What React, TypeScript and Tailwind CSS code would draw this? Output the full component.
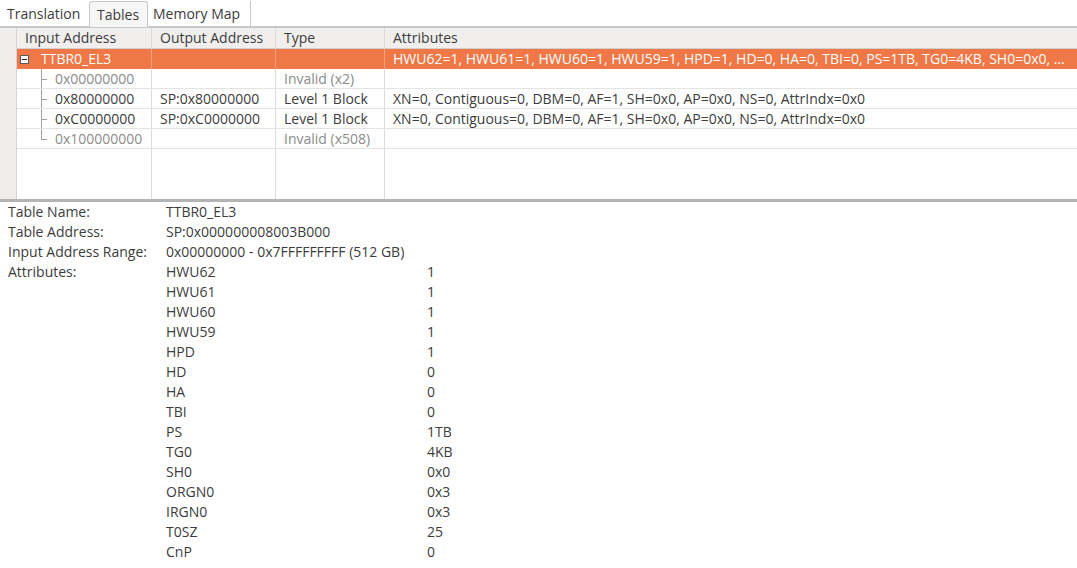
import React from 'react'

const font = { fontFamily: '"Open Sans", "DejaVu Sans", sans-serif' }

type Row = { input: string; output: string; type: string; attrs: string; invalid?: boolean; last?: boolean }

const children: Row[] = [
  { input: '0x00000000', output: '', type: 'Invalid (x2)', attrs: '', invalid: true },
  { input: '0x80000000', output: 'SP:0x80000000', type: 'Level 1 Block', attrs: 'XN=0, Contiguous=0, DBM=0, AF=1, SH=0x0, AP=0x0, NS=0, AttrIndx=0x0' },
  { input: '0xC0000000', output: 'SP:0xC0000000', type: 'Level 1 Block', attrs: 'XN=0, Contiguous=0, DBM=0, AF=1, SH=0x0, AP=0x0, NS=0, AttrIndx=0x0' },
  { input: '0x100000000', output: '', type: 'Invalid (x508)', attrs: '', invalid: true, last: true },
]

const attributes: [string, string][] = [
  ['HWU62', '1'], ['HWU61', '1'], ['HWU60', '1'], ['HWU59', '1'], ['HPD', '1'],
  ['HD', '0'], ['HA', '0'], ['TBI', '0'], ['PS', '1TB'], ['TG0', '4KB'],
  ['SH0', '0x0'], ['ORGN0', '0x3'], ['IRGN0', '0x3'], ['T0SZ', '25'], ['CnP', '0'],
]

const cell = 'h-full flex items-center border-r border-[#dcdcdc] overflow-hidden whitespace-nowrap'

function Tabs() {
  return (
    <div className="flex items-end h-[27px] bg-white">
      <div className="w-[89px] h-[26px] pl-[7px] flex items-center border-b border-[#c8c8c8]">Translation</div>
      <div className="w-[59px] h-[26px] pl-[7px] flex items-center bg-[#f6f6f6] border border-b-0 border-[#c8c8c8] rounded-t-[3px]">Tables</div>
      <div className="w-[103px] h-[26px] pl-[5px] flex items-center border-r border-b border-[#c8c8c8]">Memory Map</div>
      <div className="flex-1 h-[26px] border-b border-[#c8c8c8]" />
    </div>
  )
}

function TreeLine({ last }: { last?: boolean }) {
  return (
    <div className="relative w-[14px] h-full ml-[24px] shrink-0">
      <div className={`absolute left-0 top-0 w-px bg-[#a0a0a0] ${last ? 'h-1/2' : 'h-full'}`} />
      <div className="absolute left-0 top-1/2 w-[6px] h-px bg-[#a0a0a0]" />
    </div>
  )
}

function Table() {
  return (
    <div className="flex h-[172px] border-t border-[#c8c8c8]">
      <div className="w-[17px] shrink-0 bg-[#efeeed] border-r border-[#d4d4d4]" />
      <div className="flex-1 flex flex-col min-w-0">
        <div className="flex h-[21px] bg-[#f0efee] border-b border-[#d0d0d0] text-[#3c3c3c]">
          <div className={`${cell} w-[135px] pl-[8px] border-[#cfcfcf]`}>Input Address</div>
          <div className={`${cell} w-[124px] pl-[8px] border-[#cfcfcf]`}>Output Address</div>
          <div className={`${cell} w-[109px] pl-[8px] border-[#cfcfcf]`}>Type</div>
          <div className="flex-1 flex items-center pl-[8px]">Attributes</div>
        </div>
        <div className="flex h-[20px] bg-[#f07746] text-white">
          <div className={`${cell} w-[135px] border-[#f6a07c]`}>
            <div className="ml-[3px] mr-[12px] w-[9px] h-[9px] bg-white border border-[#5a5a5a] flex items-center justify-center shrink-0">
              <div className="w-[5px] h-px bg-[#222]" />
            </div>
            TTBR0_EL3
          </div>
          <div className={`${cell} w-[124px] border-[#f6a07c]`} />
          <div className={`${cell} w-[109px] border-[#f6a07c]`} />
          <div className="flex-1 min-w-0 flex items-center pl-[8px] whitespace-nowrap">
            HWU62=1, HWU61=1, HWU60=1, HWU59=1, HPD=1, HD=0, HA=0, TBI=0, PS=1TB, TG0=4KB, SH0=0x0, …
          </div>
        </div>
        {children.map((r) => (
          <div key={r.input} className={`flex h-[20px] border-b border-[#e4e4e4] ${r.invalid ? 'text-[#8c8c8c]' : 'text-[#3c3c3c]'}`}>
            <div className={`${cell} w-[135px]`}>
              <TreeLine last={r.last} />
              {r.input}
            </div>
            <div className={`${cell} w-[124px] pl-[8px]`}>{r.output}</div>
            <div className={`${cell} w-[109px] pl-[8px]`}>{r.type}</div>
            <div className="flex-1 flex items-center pl-[8px] whitespace-nowrap overflow-hidden">{r.attrs}</div>
          </div>
        ))}
        <div className="flex flex-1">
          <div className={`${cell} w-[135px]`} />
          <div className={`${cell} w-[124px]`} />
          <div className={`${cell} w-[109px]`} />
          <div className="flex-1" />
        </div>
      </div>
    </div>
  )
}

function Details() {
  const info: [string, string][] = [
    ['Table Name:', 'TTBR0_EL3'],
    ['Table Address:', 'SP:0x000000008003B000'],
    ['Input Address Range:', '0x00000000 - 0x7FFFFFFFFF (512 GB)'],
  ]
  return (
    <div className="pl-[8px] text-[#3c3c3c]">
      {info.map(([k, v]) => (
        <div key={k} className="flex h-[20px] items-center">
          <div className="w-[158px] shrink-0">{k}</div>
          <div>{v}</div>
        </div>
      ))}
      <div className="flex">
        <div className="w-[158px] shrink-0 h-[20px] flex items-center">Attributes:</div>
        <div className="flex flex-col">
          {attributes.map(([k, v]) => (
            <div key={k} className="flex h-[20px] items-center">
              <div className="w-[261px] shrink-0">{k}</div>
              <div>{v}</div>
            </div>
          ))}
        </div>
      </div>
    </div>
  )
}

export default function App() {
  return (
    <div className="w-[1077px] h-[568px] bg-white overflow-hidden text-[14px] leading-none text-[#3c3c3c]" style={font}>
      <Tabs />
      <Table />
      <div className="h-[3px] bg-[#b4b4b4]" />
      <Details />
    </div>
  )
}
